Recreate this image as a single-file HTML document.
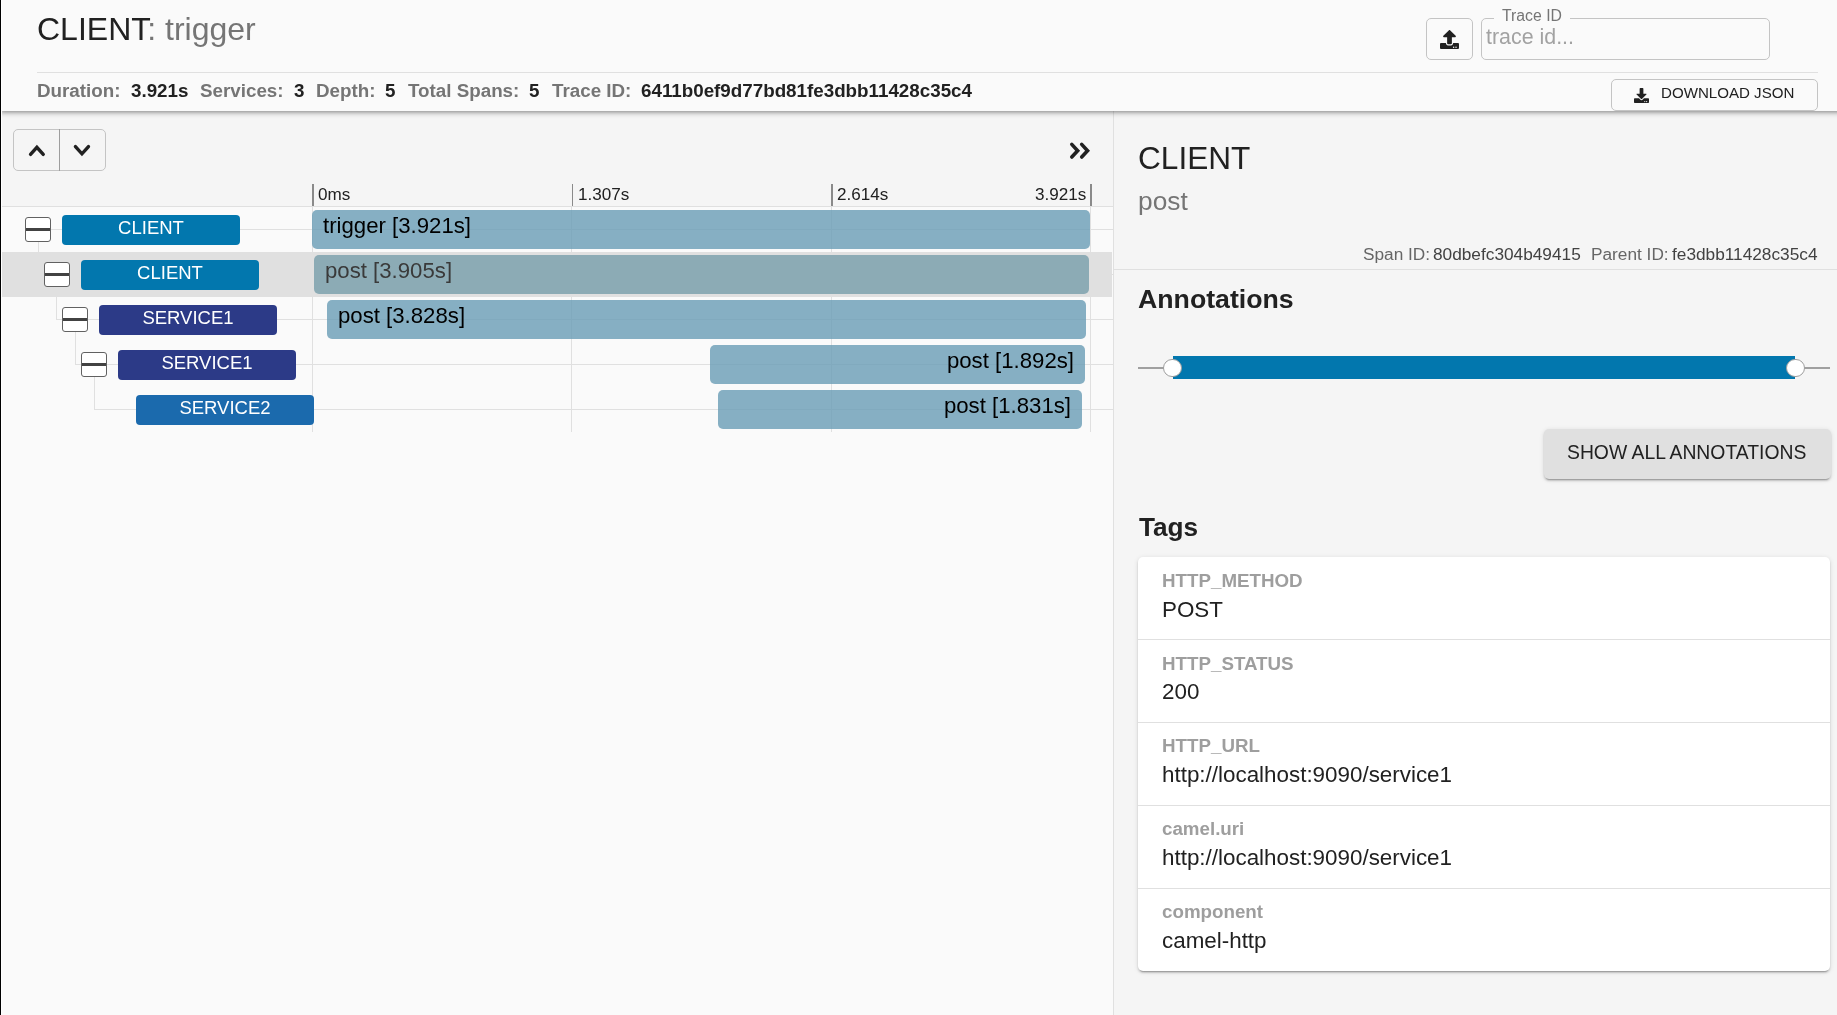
<!DOCTYPE html>
<html><head><meta charset="utf-8">
<style>
*{box-sizing:border-box;margin:0;padding:0}
html,body{width:1837px;height:1015px;overflow:hidden}
body{position:relative;background:#f5f5f5;font-family:"Liberation Sans",sans-serif;color:#212121}
.a{position:absolute}
.t{position:absolute;white-space:pre;line-height:1;will-change:transform}
#edge{left:0;top:0;width:1px;height:1015px;background:#000;z-index:50}
#edge2{left:1px;top:0;width:1px;height:1015px;background:#fff;z-index:50}
#hdr{left:0;top:0;width:1877px;height:111px;background:#fafafa;box-shadow:0 3px 3px -2px rgba(0,0,0,.2),0 3px 4px 0 rgba(0,0,0,.14),0 1px 7px 0 rgba(0,0,0,.12);z-index:10;overflow:hidden}
#rows{left:0;top:207px;width:1113px;height:808px;background:#fafafa}
#tlhead{left:0;top:206px;width:1113px;height:1px;background:#e0e0e0}
#vsep{left:1113px;top:111px;width:1px;height:904px;background:#e0e0e0}
.sel{left:0;top:252px;width:1112px;height:45px;background:#e0e0e0}
.hline{height:1px;background:#e0e0e0}
.vline{width:1px;background:#e0e0e0}
.box{width:26px;height:25px;border:1.5px solid #616161;border-radius:3px;background:#fff}
.box::after{content:"";position:absolute;left:0;right:0;top:10.3px;height:2.6px;background:#424242}
.badge{will-change:transform;width:178px;height:29.5px;border-radius:4px;color:#fff;font-size:18.5px;text-align:center;line-height:1;padding-top:3.5px}
.bar{will-change:transform;height:38.5px;border-radius:5px;background:rgba(105,156,181,.8);font-size:22.2px;line-height:1;padding:4.7px 11px 0 11px;color:#000;white-space:pre}
.tick{width:1.5px;height:22px;top:184px;background:#8a8a8a}
.tlab{font-size:17.1px;top:185.5px;color:#212121}
.sm{top:81.7px;font-size:18.8px;font-weight:700}
.lab{font-size:18.75px;font-weight:700;color:#9e9e9e}
.val{font-size:22.4px;color:#212121}
</style></head><body>
<div id="edge" class="a"></div><div id="edge2" class="a"></div>

<div id="hdr" class="a">
  <div class="t" style="left:37px;top:13px;font-size:32px;color:#212121">CLIENT<span style="color:#757575">: trigger</span></div>
  <div class="a hline" style="left:37px;top:72px;width:1781px;"></div>
  <div class="t sm" style="left:37.3px;color:#757575">Duration:</div>
  <div class="t sm" style="left:130.6px;color:#212121">3.921s</div>
  <div class="t sm" style="left:200.1px;color:#757575">Services:</div>
  <div class="t sm" style="left:293.8px;color:#212121">3</div>
  <div class="t sm" style="left:316.2px;color:#757575">Depth:</div>
  <div class="t sm" style="left:385.3px;color:#212121">5</div>
  <div class="t sm" style="left:408.4px;color:#757575">Total Spans:</div>
  <div class="t sm" style="left:528.6px;color:#212121">5</div>
  <div class="t sm" style="left:551.8px;color:#757575">Trace ID:</div>
  <div class="t sm" style="left:641.1px;color:#212121">6411b0ef9d77bd81fe3dbb11428c35c4</div>
  <!-- upload button -->
  <div class="a" style="left:1426px;top:18px;width:47px;height:42px;border:1px solid #c4c4c4;border-radius:5px"></div>
  <svg class="a" style="left:1440px;top:30px" width="19" height="19" viewBox="0 0 512 512"><path fill="#212121" d="M296 384h-80c-13.3 0-24-10.7-24-24V192h-87.7c-17.8 0-26.7-21.5-14.1-34.1L242.3 5.7c7.5-7.5 19.8-7.5 27.3 0l152.2 152.2c12.6 12.6 3.7 34.1-14.1 34.1H320v168c0 13.3-10.7 24-24 24zm216-8v112c0 13.3-10.7 24-24 24H24c-13.3 0-24-10.7-24-24V376c0-13.3 10.7-24 24-24h136v8c0 30.9 25.1 56 56 56h80c30.9 0 56-25.1 56-56v-8h136c13.3 0 24 10.7 24 24zm-124 88c0-11-9-20-20-20s-20 9-20 20 9 20 20 20 20-9 20-20zm64 0c0-11-9-20-20-20s-20 9-20 20 9 20 20 20 20-9 20-20z"/></svg>
  <!-- trace id field -->
  <div class="a" style="left:1481px;top:18px;width:289px;height:42px;border:1px solid #c4c4c4;border-radius:5px"></div>
  <div class="a" style="left:1494px;top:15px;width:76px;height:6px;background:#fafafa"></div>
  <div class="t" style="left:1502px;top:8.3px;font-size:15.8px;color:#757575">Trace ID</div>
  <div class="t" style="left:1485.8px;top:27.1px;font-size:21.4px;color:#a2a2a2">trace id...</div>
  <!-- download json -->
  <div class="a" style="left:1611px;top:79.3px;width:207px;height:31.5px;border:1px solid #c4c4c4;border-radius:5px;background:#fafafa"></div>
  <svg class="a" style="left:1634px;top:88px" width="15" height="15" viewBox="0 0 512 512"><path fill="#212121" d="M216 0h80c13.3 0 24 10.7 24 24v168h87.7c17.8 0 26.7 21.5 14.1 34.1L269.7 378.3c-7.5 7.5-19.8 7.5-27.3 0L90.1 226.1c-12.6-12.6-3.7-34.1 14.1-34.1H192V24c0-13.3 10.7-24 24-24zm296 376v112c0 13.3-10.7 24-24 24H24c-13.3 0-24-10.7-24-24V376c0-13.3 10.7-24 24-24h146.7l49 49c20.1 20.1 52.5 20.1 72.6 0l49-49H488c13.3 0 24 10.7 24 24zm-124 88c0-11-9-20-20-20s-20 9-20 20 9 20 20 20 20-9 20-20zm64 0c0-11-9-20-20-20s-20 9-20 20 9 20 20 20 20-9 20-20z"/></svg>
  <div class="t" style="left:1661px;top:85.2px;font-size:15.1px;color:#212121">DOWNLOAD JSON</div>
</div>

<div id="rows" class="a"></div>
<div id="tlhead" class="a"></div>
<div id="vsep" class="a"></div>

<!-- up/down -->
<div class="a" style="left:13px;top:129px;width:93px;height:42px;border:1px solid #c4c4c4;border-radius:5px"></div>
<div class="a" style="left:59px;top:129px;width:1px;height:42px;background:#9e9e9e"></div>
<svg class="a" style="left:0;top:120px" width="120" height="60" viewBox="0 120 120 60">
  <polyline points="30.55,154.35 36.9,147.3 43.25,154.35" fill="none" stroke="#212121" stroke-width="3.4" stroke-linecap="round" stroke-linejoin="miter"/>
  <polyline points="75.45,146.55 81.95,153.8 88.45,146.55" fill="none" stroke="#212121" stroke-width="3.4" stroke-linecap="round" stroke-linejoin="miter"/>
</svg>
<!-- >> -->
<svg class="a" style="left:1060px;top:135px" width="40" height="30" viewBox="1060 135 40 30">
  <polyline points="1071.8,144.4 1077.65,150.7 1071.8,157" fill="none" stroke="#212121" stroke-width="3.6" stroke-linecap="round" stroke-linejoin="miter"/>
  <polyline points="1081.7,144.4 1087.55,150.7 1081.7,157" fill="none" stroke="#212121" stroke-width="3.6" stroke-linecap="round" stroke-linejoin="miter"/>
</svg>

<!-- ticks -->
<div class="a tick" style="left:312.3px"></div>
<div class="a tick" style="left:571.5px"></div>
<div class="a tick" style="left:831px"></div>
<div class="a tick" style="left:1090.3px"></div>
<div class="t tlab" style="left:318px">0ms</div>
<div class="t tlab" style="left:578px">1.307s</div>
<div class="t tlab" style="left:837px">2.614s</div>
<div class="t tlab" style="left:1035px">3.921s</div>

<div class="a sel"></div>

<!-- grid vertical lines -->
<div class="a vline" style="left:312px;top:207px;height:225px"></div>
<div class="a vline" style="left:571px;top:207px;height:225px"></div>
<div class="a vline" style="left:831px;top:207px;height:225px"></div>
<div class="a vline" style="left:1090px;top:207px;height:225px"></div>

<!-- row center lines -->
<div class="a hline" style="left:38px;top:229px;width:1075px"></div>
<div class="a hline" style="left:56px;top:274px;width:1057px"></div>
<div class="a hline" style="left:56px;top:319px;width:1057px"></div>
<div class="a hline" style="left:75px;top:364px;width:1038px"></div>
<div class="a hline" style="left:94px;top:409px;width:1019px"></div>
<!-- connectors vertical -->
<div class="a vline" style="left:38px;top:242px;height:32px"></div>
<div class="a vline" style="left:56px;top:287px;height:32px"></div>
<div class="a vline" style="left:75px;top:332px;height:32px"></div>
<div class="a vline" style="left:94px;top:377px;height:32px"></div>

<!-- boxes -->
<div class="a box" style="left:25px;top:217px"></div>
<div class="a box" style="left:44px;top:262px"></div>
<div class="a box" style="left:62px;top:307px"></div>
<div class="a box" style="left:81px;top:352px"></div>

<!-- badges -->
<div class="a badge" style="left:62px;top:215px;background:#0277ae">CLIENT</div>
<div class="a badge" style="left:81px;top:260px;background:#0277ae">CLIENT</div>
<div class="a badge" style="left:99px;top:305px;background:#2c3a87">SERVICE1</div>
<div class="a badge" style="left:118px;top:350px;background:#2c3a87">SERVICE1</div>
<div class="a badge" style="left:136px;top:395px;background:#1b6aad">SERVICE2</div>

<!-- bars -->
<div class="a bar" style="left:312px;top:210px;width:778px">trigger [3.921s]</div>
<div class="a bar" style="left:314px;top:255px;width:775px;color:#3a3a3a;background:rgba(119,157,170,.8)">post [3.905s]</div>
<div class="a bar" style="left:327px;top:300px;width:759px">post [3.828s]</div>
<div class="a bar" style="left:710px;top:345px;width:375px;text-align:right">post [1.892s]</div>
<div class="a bar" style="left:718px;top:390px;width:364px;text-align:right">post [1.831s]</div>

<!-- right panel -->
<div class="t" style="left:1137.5px;top:142.9px;font-size:31.6px">CLIENT</div>
<div class="t" style="left:1137.5px;top:187.5px;font-size:26.3px;color:#757575">post</div>
<div class="t" style="left:1362.5px;top:245.6px;font-size:17.25px;color:#666">Span ID:</div>
<div class="t" style="left:1432.5px;top:245.6px;font-size:17.25px;color:#424242">80dbefc304b49415</div>
<div class="t" style="left:1591.3px;top:245.6px;font-size:17.25px;color:#666">Parent ID:</div>
<div class="t" style="left:1672px;top:245.6px;font-size:17.25px;color:#424242">fe3dbb11428c35c4</div>
<div class="a hline" style="left:1114px;top:269px;width:723px"></div>
<div class="t" style="left:1137.5px;top:286.3px;font-size:26.7px;font-weight:700">Annotations</div>
<div class="a" style="left:1138px;top:367px;width:692px;height:2px;background:#a0a0a0"></div>
<div class="a" style="left:1172.5px;top:356.3px;width:622.5px;height:23px;background:#0277ae"></div>
<div class="a" style="left:1163px;top:358.5px;width:18.5px;height:18.5px;border-radius:50%;background:#fff;border:1px solid #9e9e9e"></div>
<div class="a" style="left:1786.3px;top:358.5px;width:18.5px;height:18.5px;border-radius:50%;background:#fff;border:1px solid #9e9e9e"></div>
<div class="a" style="left:1543.5px;top:429.2px;width:287px;height:49.6px;background:#e0e0e0;border-radius:5px;box-shadow:0 3px 1px -2px rgba(0,0,0,.2),0 2px 2px 0 rgba(0,0,0,.14),0 1px 5px 0 rgba(0,0,0,.12)"></div>
<div class="t" style="left:1567.2px;top:442.9px;font-size:19.35px;color:#212121">SHOW ALL ANNOTATIONS</div>
<div class="t" style="left:1138.5px;top:513.5px;font-size:26.2px;font-weight:700">Tags</div>

<div class="a" style="left:1138px;top:557px;width:692px;height:414px;background:#fff;border-radius:5px;box-shadow:0 3px 1px -2px rgba(0,0,0,.2),0 2px 2px 0 rgba(0,0,0,.14),0 1px 5px 0 rgba(0,0,0,.12)"></div>
<div class="a hline" style="left:1138px;top:639.4px;width:692px"></div>
<div class="a hline" style="left:1138px;top:722.3px;width:692px"></div>
<div class="a hline" style="left:1138px;top:805.2px;width:692px"></div>
<div class="a hline" style="left:1138px;top:888.3px;width:692px"></div>
<div class="t lab" style="left:1161.5px;top:571.7px">HTTP_METHOD</div>
<div class="t val" style="left:1161.5px;top:598.6px">POST</div>
<div class="t lab" style="left:1161.5px;top:654.5px">HTTP_STATUS</div>
<div class="t val" style="left:1161.5px;top:681.4px">200</div>
<div class="t lab" style="left:1161.5px;top:737.3px">HTTP_URL</div>
<div class="t val" style="left:1161.5px;top:764.2px">http://localhost:9090/service1</div>
<div class="t lab" style="left:1161.5px;top:820.1px">camel.uri</div>
<div class="t val" style="left:1161.5px;top:847.0px">http://localhost:9090/service1</div>
<div class="t lab" style="left:1161.5px;top:902.9px">component</div>
<div class="t val" style="left:1161.5px;top:929.8px">camel-http</div>

</body></html>
